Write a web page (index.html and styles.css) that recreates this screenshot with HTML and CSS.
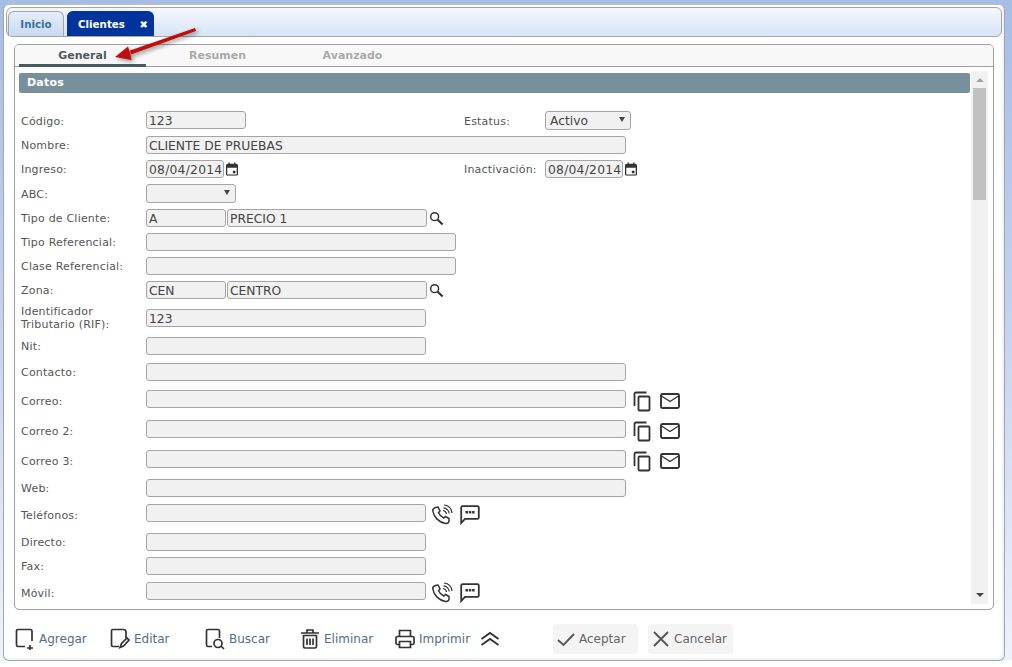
FILE: index.html
```html
<!DOCTYPE html>
<html lang="es">
<head>
<meta charset="utf-8">
<title>Clientes</title>
<link rel="stylesheet" href="styles.css">
</head>
<body>
<div class="window">
  <div class="tabbar">
    <div class="tab">Inicio</div>
    <div class="tab active">Clientes <span class="close">✖</span></div>
  </div>
  <div class="panel">
    <div class="subtabs">
      <div class="subtab on">General</div>
      <div class="subtab">Resumen</div>
      <div class="subtab">Avanzado</div>
    </div>
    <div class="scroller">
      <div class="content">
        <div class="heading">Datos</div>
        <div class="form">
          <div class="row r1">
            <span class="lab">Código:</span><span class="in w100">123</span>
            <span class="lab lab2 push">Estatus:</span><span class="in sel w86">Activo<i class="tri"></i></span>
          </div>
          <div class="row m6"><span class="lab">Nombre:</span><span class="in w480">CLIENTE DE PRUEBAS</span></div>
          <div class="row m6">
            <span class="lab">Ingreso:</span><span class="in date w78">08/04/2014</span>
            <svg class="ic cal" viewBox="0 0 14 16"><use href="#cal"/></svg>
            <span class="lab lab2 push2">Inactivación:</span><span class="in date w78">08/04/2014</span>
            <svg class="ic cal" viewBox="0 0 14 16"><use href="#cal"/></svg>
          </div>
          <div class="row r4"><span class="lab">ABC:</span><span class="in sel w90"><i class="tri"></i></span></div>
          <div class="row m6"><span class="lab">Tipo de Cliente:</span><span class="in w80">A</span><span class="in w200 near">PRECIO 1</span><svg class="ic mag" viewBox="0 0 16 16"><use href="#mag"/></svg></div>
          <div class="row m6"><span class="lab">Tipo Referencial:</span><span class="in w310"></span></div>
          <div class="row m6"><span class="lab">Clase Referencial:</span><span class="in w310"></span></div>
          <div class="row m6"><span class="lab">Zona:</span><span class="in w80">CEN</span><span class="in w200 near">CENTRO</span><svg class="ic mag" viewBox="0 0 16 16"><use href="#mag"/></svg></div>
          <div class="row m10"><span class="lab tall">Identificador<br>Tributario (RIF):</span><span class="in w280">123</span></div>
          <div class="row m10"><span class="lab">Nit:</span><span class="in w280"></span></div>
          <div class="row m8"><span class="lab">Contacto:</span><span class="in w480"></span></div>
          <div class="row m9 low"><span class="lab">Correo:</span><span class="in w480"></span><svg class="ic cp" viewBox="0 0 20 21"><use href="#cp"/></svg><svg class="ic ml" viewBox="0 0 20 16"><use href="#ml"/></svg></div>
          <div class="row m12 low"><span class="lab">Correo 2:</span><span class="in w480"></span><svg class="ic cp" viewBox="0 0 20 21"><use href="#cp"/></svg><svg class="ic ml" viewBox="0 0 20 16"><use href="#ml"/></svg></div>
          <div class="row m12 low"><span class="lab">Correo 3:</span><span class="in w480"></span><svg class="ic cp" viewBox="0 0 20 21"><use href="#cp"/></svg><svg class="ic ml" viewBox="0 0 20 16"><use href="#ml"/></svg></div>
          <div class="row m11"><span class="lab">Web:</span><span class="in w480"></span></div>
          <div class="row m7 low"><span class="lab">Teléfonos:</span><span class="in w280"></span><svg class="ic ph" viewBox="0 0 22 22"><use href="#ph"/></svg><svg class="ic ch" viewBox="0 0 20 20"><use href="#ch"/></svg></div>
          <div class="row m11"><span class="lab">Directo:</span><span class="in w280"></span></div>
          <div class="row m6"><span class="lab">Fax:</span><span class="in w280"></span></div>
          <div class="row m7 low"><span class="lab">Móvil:</span><span class="in w280"></span><svg class="ic ph" viewBox="0 0 22 22"><use href="#ph"/></svg><svg class="ic ch" viewBox="0 0 20 20"><use href="#ch"/></svg></div>
        </div>
      </div>
      <div class="sbar">
        <i class="up"></i>
        <div class="thumb"></div>
        <i class="down"></i>
      </div>
    </div>
  </div>
  <div class="toolbar">
    <div class="tool t1"><svg viewBox="0 0 20 22"><path d="M17 13V3A1.500 1.500 0 0 0 15.500 1.500H3A1.500 1.500 0 0 0 1.500 3V17A1.500 1.500 0 0 0 3 18.500H10M15 17V22M12 20H18"/></svg>Agregar</div>
    <div class="tool t2"><svg viewBox="0 0 20 22"><path d="M9 18.500H3A1.500 1.500 0 0 1 1.500 17V3A1.500 1.500 0 0 1 3 1.500H13.500A2.500 2.500 0 0 1 16 4V10M10 19.500L11.500 15.500L17 10L19 12L13.500 18Z"/></svg>Editar</div>
    <div class="tool t3"><svg viewBox="0 0 20 22"><path d="M7 18.500H3A1.500 1.500 0 0 1 1.500 17V3A1.500 1.500 0 0 1 3 1.500H13A1.500 1.500 0 0 1 14.500 3V10M16.500 18.500L19 21"/><circle cx="13" cy="15.500" r="4"/></svg>Buscar</div>
    <div class="tool t4"><svg viewBox="0 0 20 22"><path d="M1 5H19M7 4.500V2H13V4.500M3.500 7.500V18.500A1.500 1.500 0 0 0 5 20H15A1.500 1.500 0 0 0 16.500 18.500V7.500ZM7 10.500V17M10 10.500V17M13 10.500V17"/></svg>Eliminar</div>
    <div class="tool t5"><svg viewBox="0 0 20 22"><path d="M4.500 8V2.500H15.500V8M4 16.500H2.500A1.500 1.500 0 0 1 1 15V10A1.500 1.500 0 0 1 2.500 8.500H17.500A1.500 1.500 0 0 1 19 10V15A1.500 1.500 0 0 1 17.500 16.500H16M4.500 13.500H15.500V19.500H4.500Z"/></svg>Imprimir</div>
    <svg class="chev" viewBox="0 0 20 16"><path d="M1.500 8L10 2L18.500 8M1.500 14L10 8L18.500 14"/></svg>
    <div class="btn b1"><svg viewBox="0 0 20 20"><path d="M2 11L7.500 16L18 5"/></svg>Aceptar</div>
    <div class="btn b2"><svg viewBox="0 0 20 20"><path d="M3 3L17 17M17 3L3 17"/></svg>Cancelar</div>
  </div>
</div>
<svg class="arrow" viewBox="0 0 90 40"><path class="ar" d="M82 2L17 24.500L18 28.500L83 5Z"/><path class="ar" d="M2 31L15 20.500L17 26.500L18.500 34Z"/></svg>
<svg class="defs" width="0" height="0">
  <symbol id="cal" viewBox="0 0 14 16"><path class="f" d="M3 0H4.500V2H9.500V0H11V2H12A2 2 0 0 1 14 4V14A2 2 0 0 1 12 16H2A2 2 0 0 1 0 14V4A2 2 0 0 1 2 2H3ZM1.500 6.500V14A.5.5 0 0 0 2 14.500H12A.5.5 0 0 0 12.500 14V6.500ZM8 10H11V13H8Z"/></symbol>
  <symbol id="mag" viewBox="0 0 16 16"><circle class="s" cx="6" cy="6" r="4.200" stroke-width="1.600"/><path class="s" d="M9 9L14.500 14.500" stroke-width="2.200"/></symbol>
  <symbol id="cp" viewBox="0 0 20 21"><path class="s" d="M13.500 1.500H2.800A1.300 1.300 0 0 0 1.500 2.800V15M6.500 5.500H15.500A1 1 0 0 1 16.500 6.500V18.500A1 1 0 0 1 15.500 19.500H6.500A1 1 0 0 1 5.500 18.500V6.500A1 1 0 0 1 6.500 5.500Z" stroke-width="1.800"/></symbol>
  <symbol id="ml" viewBox="0 0 20 16"><rect class="s" x="1" y="1" width="18" height="14" rx="1.500" stroke-width="1.900"/><path class="s" d="M1.500 3L10 8.500L18.500 3" stroke-width="1.400"/></symbol>
  <symbol id="ph" viewBox="0 0 22 22"><path class="s" d="M4.500 3.500L7 3L9 7L7.500 8.800C8.500 11 10.500 13 12.800 14L14.500 12.500L18 14.500V17C18 18.500 16.500 19.800 14.500 19.500C8 18.500 2.800 13 1.800 7C1.600 5.500 2.800 4 4.500 3.500Z" stroke-width="1.500"/><path class="s" d="M12 6.500C14 6.700 15.300 8 15.500 10M12.500 3.800C15.500 4 18 6.500 18.200 9.500M13 1C17.500 1.500 20.500 4.500 21 9" stroke-width="1.200"/></symbol>
  <symbol id="ch" viewBox="0 0 20 20"><path class="s" d="M2.500 1.200H17.500A1.300 1.300 0 0 1 18.800 2.500V12.500A1.300 1.300 0 0 1 17.500 13.800H5L1.200 18V2.500A1.300 1.300 0 0 1 2.500 1.200Z" stroke-width="1.800"/><path class="f" d="M5.500 6H8V8.500H5.500ZM8.800 6H11.300V8.500H8.800ZM12.100 6H14.600V8.500H12.100Z"/></symbol>
</svg>
</body>
</html>
```
FILE: styles.css
```css
* { box-sizing: border-box; }
html, body { margin: 0; height: 100%; }
body {
  width: 1012px; height: 667px; overflow: hidden; position: relative;
  background: linear-gradient(#a6bde6 0, #c3d1ee 300px, #eef2fb 660px, #fff 660px);
  font-family: "DejaVu Sans", sans-serif; font-size: 11px; color: #555;
  padding: 4px 7px 0 3px;
}
.window {
  height: 657px; background: #fff; border: 1px solid #a5a5a5; border-top-color: #bbb;
  border-radius: 6px; padding: 2px;
  display: flex; flex-direction: column;
  box-shadow: inset -2px -2px 2px #eef2f8;
}
.tabbar {
  height: 30px; flex: none; display: flex; align-items: flex-end; gap: 3px; padding-left: 1px;
  background: linear-gradient(#f3f7fd, #d7e4f6);
  border: 1px solid #a5a5a5; border-radius: 6px;
}
.tab {
  width: 56px; height: 25px; border: 1px solid #a5a5a5; border-bottom: 0; border-radius: 6px 6px 0 0;
  background: linear-gradient(#e6eefa, #c8d9f0);
  color: #36709f; font-weight: bold; font-size: 10.300px; line-height: 25px; text-align: center;
}
.tab.active { width: 87px; background: #00339b; color: #fff; border-color: #00339b; text-align: left; padding-left: 10px; display: flex; justify-content: space-between; padding-right: 5px; }
.close { font-size: 10px; }
.panel {
  margin: 7px 8px 0 8px; height: 566px; flex: none; border: 1px solid #a0a0a0; border-radius: 5px;
  display: flex; flex-direction: column; overflow: hidden;
}
.subtabs { height: 22px; flex: none; background: #f8f8f8; border-bottom: 1px solid #a0a0a0; display: flex; padding-left: 4px; gap: 8px; }
.subtab { width: 127px; height: 22px; text-align: center; font-weight: bold; color: #aaa; line-height: 22px; font-size: 11px; }
.subtab.on { color: #4d5b60; border-bottom: 3px solid #455a64; }
.scroller { flex: 1; min-height: 0; display: flex; padding: 6px 0 0 4px; overflow: hidden; }
.content { flex: 1; min-width: 0; }
.heading { height: 20px; background: #78909c; color: #fff; font-weight: bold; font-size: 11px; line-height: 20px; padding-left: 8px; border-radius: 2px; width: 951px; letter-spacing: .2px; }
.form { padding-left: 2px; padding-top: 18px; }
.row { display: flex; align-items: center; height: 18px; }
.r1 { height: 19px; align-items: flex-start; }
.r1 .lab { margin-top: 4px; }
.r4 { height: 19px; margin-top: 6px; }
.r4 .lab { margin-top: 1px; }
.m6 { margin-top: 6px; }
.m7 { margin-top: 7px; }
.m8 { margin-top: 8px; }
.m9 { margin-top: 9px; }
.m10 { margin-top: 10px; }
.m11 { margin-top: 11px; }
.m12 { margin-top: 12px; }
.lab { width: 125px; flex: none; color: #555; font-size: 11px; letter-spacing: .2px; line-height: 13px; }
.low .lab { margin-top: 4px; }
.lab2 { width: 81px; }
.push { margin-left: 218px; }
.push2 { margin-left: 226px; }
.in {
  display: block; height: 18px; flex: none; background: #f1f1f1; border: 1px solid #a5a5a5; border-radius: 3px;
  font-size: 12.300px; color: #444; line-height: 18px; padding-left: 2px; position: relative; white-space: nowrap; overflow: hidden;
}
.date { letter-spacing: .25px; }
.sel { padding-left: 4px; height: 19px; }
.tri { position: absolute; right: 5px; top: 5px; border: 3px solid transparent; border-top: 5px solid #444; border-bottom: 0; }
.w78 { width: 78px; } .w80 { width: 80px; } .w86 { width: 86px; } .w90 { width: 90px; } .w100 { width: 100px; }
.w200 { width: 200px; } .w280 { width: 280px; } .w310 { width: 310px; } .w480 { width: 480px; }
.near { margin-left: 1px; }
.ic { flex: none; display: block; }
.cal { width: 12px; height: 14px; margin-left: 2px; }
.mag { width: 15px; height: 15px; margin-left: 2px; }
.cp { width: 20px; height: 21px; margin: 4px 0 0 7px; }
.ml { width: 20px; height: 16px; margin: 4px 0 0 7px; }
.ph { width: 22px; height: 22px; margin: 3px 0 0 5px; }
.ch { width: 20px; height: 20px; margin: 4px 0 0 7px; }
.defs { position: absolute; }
.f { fill: #333; fill-rule: evenodd; }
.s { fill: none; stroke: #333; }
.sbar { width: 17px; flex: none; background: #f1f1f1; display: flex; flex-direction: column; align-items: center; margin: -2px 5px 5px 0; }
.thumb { width: 13px; height: 112px; background: #c1c1c1; margin-top: 6px; }
.up, .down { display: block; border: 4px solid transparent; flex: none; }
.up { border-bottom: 4px solid #a3a3a3; border-top: 0; margin-top: 7px; }
.down { border-top: 4px solid #444; border-bottom: 0; margin-top: auto; margin-bottom: 7px; }
.toolbar { flex: 1; display: flex; align-items: center; padding: 9px 0 0 9px; font-size: 12px; color: #546e7a; }
.tool { display: flex; align-items: center; gap: 4px; flex: none; }
.tool svg { width: 20px; height: 22px; fill: none; stroke: #333; stroke-width: 1.700; flex: none; }
.t1 { width: 95px; } .t2 { width: 95px; } .t3 { width: 95px; } .t4 { width: 95px; }
.t5 { width: 85px; }
.chev { width: 20px; height: 16px; fill: none; stroke: #333; stroke-width: 1.900; flex: none; margin-right: 53px; }
.btn { width: 85px; height: 30px; background: #f4f4f4; border-radius: 3px; display: flex; align-items: center; gap: 3px; padding-left: 3px; color: #666; margin-right: 10px; flex: none; }
.btn svg { width: 20px; height: 20px; fill: none; stroke: #555; stroke-width: 1.900; flex: none; }
.arrow { position: absolute; left: 113px; top: 26px; width: 90px; height: 40px; filter: drop-shadow(2px 2px 2px rgba(0,0,0,.4)); }
.ar { fill: #c00d0d; }
```
